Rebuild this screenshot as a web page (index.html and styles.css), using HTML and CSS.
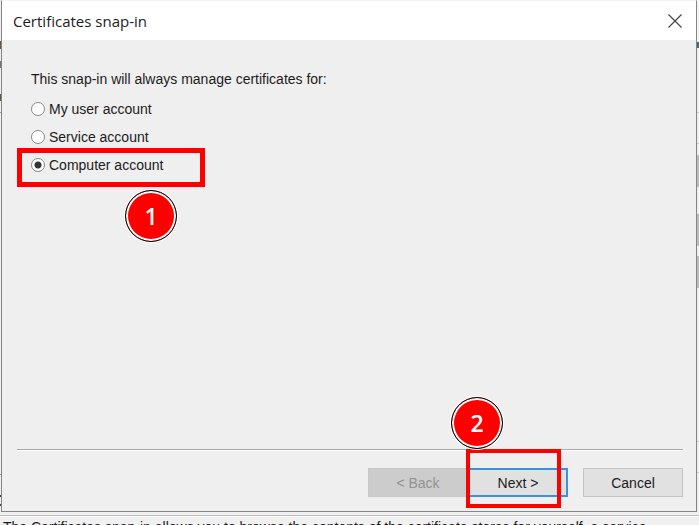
FILE: index.html
```html
<!DOCTYPE html>
<html lang="en">
<head>
<meta charset="utf-8">
<title>Certificates snap-in</title>
<link rel="stylesheet" href="styles.css">
</head>
<body>
<div class="stage">
  <div class="edge edge-left"></div>
  <main class="dialog">
    <header class="titlebar">
      <h1 class="title">Certificates snap-in</h1>
      <button class="close" type="button" aria-label="Close">
        <svg width="14" height="14" viewBox="0 0 14 14"><path d="M.5 .5 13.5 13.5M13.5 .5.5 13.5" fill="none" stroke="#444" stroke-width="1.2"/></svg>
      </button>
    </header>
    <form class="content">
      <fieldset class="choices">
        <legend class="prompt">This snap-in will always manage certificates for:</legend>
        <label class="choice"><input type="radio" name="account">My user account</label>
        <label class="choice"><input type="radio" name="account">Service account</label>
        <label class="choice marked"><input type="radio" name="account" checked>Computer account<span class="frame frame-choice"></span><span class="step step-one">1</span></label>
      </fieldset>
      <footer class="actions">
        <div class="pair">
          <button class="button back" type="button" disabled>&lt; Back</button>
          <div class="marked next-wrap">
            <button class="button next" type="button">Next &gt;</button>
            <span class="frame frame-next"></span><span class="step step-two">2</span>
          </div>
        </div>
        <button class="button" type="button">Cancel</button>
      </footer>
    </form>
  </main>
  <div class="edge edge-right"></div>
</div>
<p class="description">The Certificates snap-in allows you to browse the contents of the certificate stores for yourself, a service,</p>
</body>
</html>
```
FILE: styles.css
```css
* { box-sizing: border-box; }

body {
  margin: 0;
  height: 100vh;
  overflow: hidden;
  display: flex;
  flex-direction: column;
  background: #f0f0f0;
  color: #1c1c1c;
  font-family: "Liberation Sans", Arial, sans-serif;
  font-size: 14px;
  line-height: 18px;
}

.stage {
  flex: 1;
  min-height: 0;
  display: grid;
  grid-template-columns: 1px 1fr 2px;
}

.edge-left {
  background: linear-gradient(#eee 41px, #654 41px 49px, #eee 49px 61px, #777 61px 68px, #eee 68px 94px, #654 94px 101px, #eee 101px 112px, #999 112px 113px, #eee 113px 474px, #999 474px 475px, #eee 475px 495px, #444 495px 497px, #eee 497px 504px, #444 504px 506px, #eee 506px);
}

.edge-right {
  background: linear-gradient(#f4f4f4 42px, #467 42px 48px, #eee 48px 112px, #ccc 112px 113px, #eee 113px 143px, #ccc 143px 144px, #eee 144px 155px, #bbb 155px 187px, #eee 187px 214px, #bbb 214px 246px, #eee 246px 256px, #bbb 256px 288px, #eee 288px 441px, #ccc 441px 442px, #eee 442px 472px, #ccc 472px 473px, #eee 473px);
}

.dialog {
  display: flex;
  flex-direction: column;
  border: 1px solid #858585;
  border-top-color: #f4f4f4;
  background: #efefef;
}

.titlebar {
  display: flex;
  align-items: center;
  justify-content: space-between;
  height: 39px;
  padding: 0 14px 0 11px;
  background: #fff;
}

.title {
  margin: 0;
  font: 400 15px/20px "Open Sans", "Noto Sans", sans-serif;
}

.close {
  display: flex;
  padding: 0;
  border: 0;
  background: none;
}

.content {
  flex: 1;
  display: flex;
  flex-direction: column;
  justify-content: space-between;
  padding: 30px 13px 14px 15px;
}

.choices {
  display: flex;
  flex-direction: column;
  align-items: flex-start;
  gap: 10px;
  margin: 0;
  padding: 12px 14px 0;
  border: 0;
}

.prompt { padding: 0; }

.choice {
  display: flex;
  align-items: center;
  gap: 4px;
}

.choice input {
  appearance: none;
  width: 14px;
  height: 14px;
  margin: 0;
  border: 1px solid #888;
  border-radius: 50%;
  background: #fff;
}

.choice input:checked {
  background: radial-gradient(circle, #333 3px, #fff 4px);
}

.marked { position: relative; }

.frame {
  position: absolute;
  border: 4px solid #f00;
  pointer-events: none;
}

.frame-choice {
  inset: -8px -42px -13px -14px;
  border-width: 5px;
}

.frame-next { inset: -19px 7px -11px -2px; }

.step {
  position: absolute;
  display: grid;
  place-items: center;
  width: 52px;
  height: 52px;
  border: 1px solid #000;
  border-radius: 50%;
  background: #f00;
  box-shadow: inset 0 0 0 2px #fff, 0 0 0 1px #fff;
  color: #fff;
  font: 600 23px/28px "Open Sans", "Noto Sans", sans-serif;
}

.step-one { left: 94px; top: 34px; }
.step-two { left: -17px; top: -71px; }

.actions {
  display: flex;
  justify-content: flex-end;
  gap: 15px;
  padding-top: 18px;
  border-top: 1px solid #aaa;
  box-shadow: inset 0 1px #fff;
}

.pair { display: flex; }

.button {
  width: 100px;
  height: 29px;
  padding: 0;
  border: 1px solid #c4c4c4;
  background: #e1e1e1;
  color: inherit;
  font: inherit;
}

.back {
  border-color: #c8c8c8;
  background: #ccc;
  color: #929292;
}

.next { border: 2px solid #3993dc; }

.description {
  flex: none;
  height: 13px;
  margin: 0;
  padding: 6px 3px 0;
  overflow: hidden;
  white-space: nowrap;
  background: linear-gradient(#f0f0f0 3px, #bbb 3px 4px, #fff 4px 5px, #f0f0f0 5px);
}
```
